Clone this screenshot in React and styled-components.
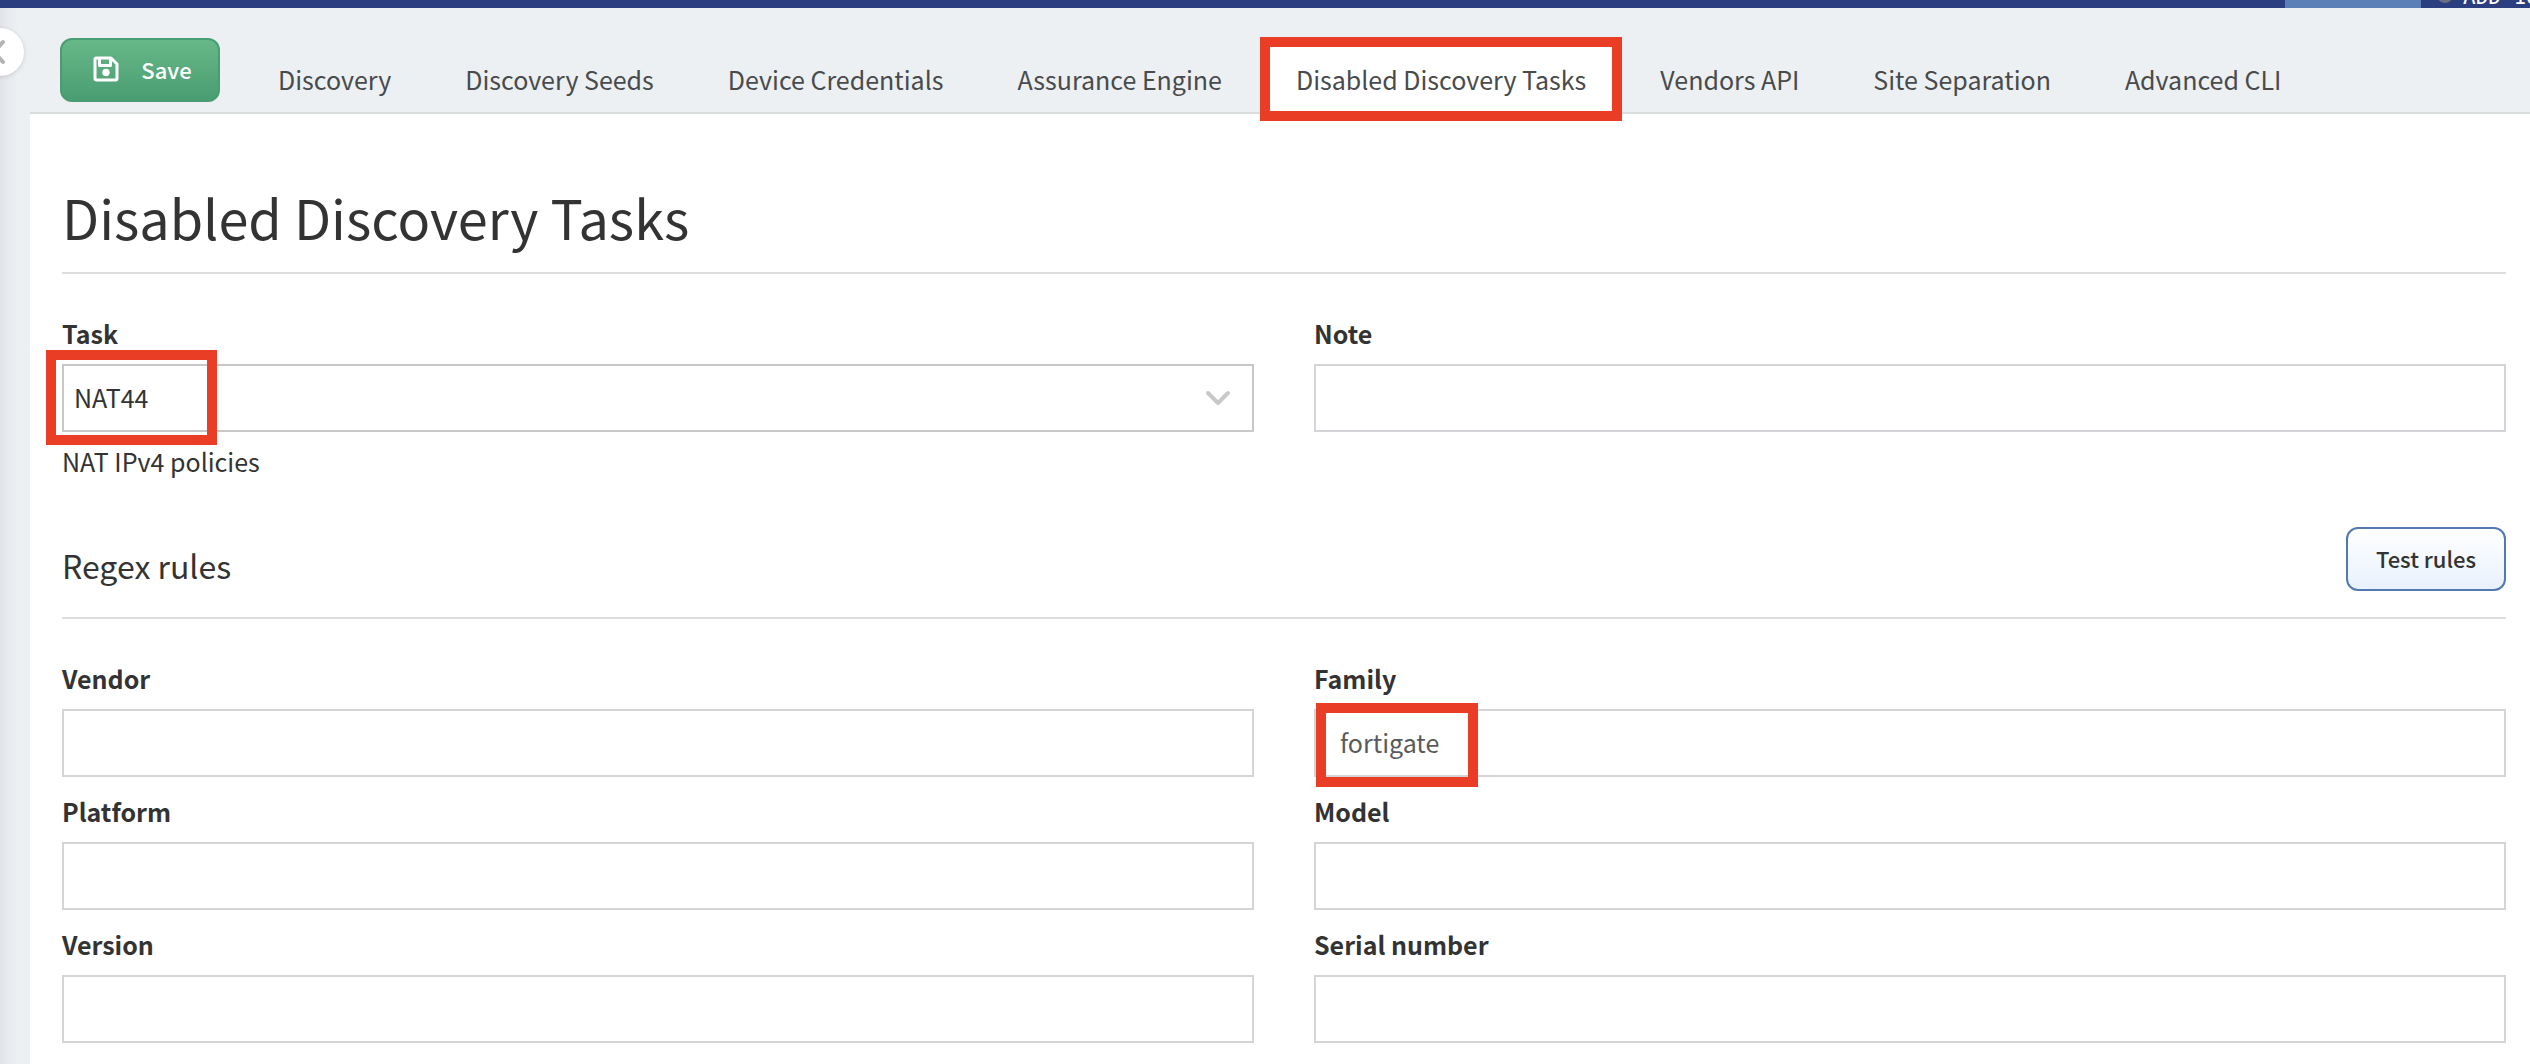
import React from "react";
import styled, { createGlobalStyle } from "styled-components";

const GlobalStyle = createGlobalStyle`
  *, *::before, *::after { box-sizing: border-box; }
  body {
    margin: 0;
    background: #fff;
    color: #333;
    font-family: "Noto Sans CJK SC", "Source Sans Pro", sans-serif;
    font-size: 25px;
    line-height: 38px;
  }
  button, input, select { font: inherit; color: inherit; }
`;

const Page = styled.div`
  display: flex;
  flex-direction: column;
  min-height: 100vh;
  overflow: hidden;
`;

const TopBar = styled.header`
  display: flex;
  justify-content: flex-end;
  height: 8px;
  overflow: hidden;
  background: #2b3f80;
`;

const TopBarActive = styled.div`
  width: 136px;
  background: #5b80b8;
`;

const Snapshot = styled.div`
  display: flex;
  align-items: flex-end;
  gap: 10px;
  width: 109px;
  padding-left: 16px;
  color: #fff;
  font-family: "DejaVu Sans Mono", monospace;
  font-size: 21px;
  line-height: 22px;
  white-space: nowrap;
`;

const Status = styled.span`
  flex: none;
  width: 16px;
  height: 16px;
  margin-bottom: 5px;
  border-radius: 50%;
  background: #6b6f7c;
`;

const Body = styled.div`
  display: flex;
  flex: 1;
`;

const Rail = styled.aside`
  position: relative;
  flex: none;
  width: 30px;
  background: linear-gradient(90deg, #e1e3e7 0, #e7eaee 8px, #ecf0f3 18px);
`;

const Collapse = styled.button`
  position: absolute;
  top: 20px;
  left: -24px;
  display: flex;
  align-items: center;
  justify-content: center;
  width: 48px;
  height: 48px;
  padding: 0;
  border: 0;
  border-radius: 50%;
  background: #fff;
  color: #b4b4b4;
  box-shadow: 0 1px 5px rgba(0, 0, 0, 0.14);
`;

const Main = styled.div`
  flex: 1;
  min-width: 0;
`;

const Toolbar = styled.div`
  display: flex;
  align-items: flex-end;
  gap: 21px;
  height: 106px;
  padding-left: 30px;
  border-bottom: 2px solid #d9dcdd;
  background: #ecf0f3;
`;

const Button = styled.button`
  display: flex;
  align-items: center;
  justify-content: center;
  gap: 22px;
  width: 160px;
  height: 64px;
  padding: ${(p) => (p.$primary ? "0 0 2px 5px" : "0 0 2px")};
  border: 2px solid ${(p) => (p.$primary ? "#4a9d72" : "#5379b1")};
  border-radius: 12px;
  background: ${(p) =>
    p.$primary
      ? "linear-gradient(#67b888, #4a9d72)"
      : "linear-gradient(#fff, #e8f1fc)"};
  color: ${(p) => (p.$primary ? "#fff" : "#333")};
  font-size: 22px;
  font-weight: 500;
  line-height: 32px;
`;

const SaveSlot = styled.div`
  padding-bottom: 10px;
`;

const Tabs = styled.nav`
  display: flex;
`;

const Tab = styled.a`
  position: relative;
  padding: 18px 37px 14px;
  background: ${(p) => (p.$active ? "linear-gradient(#fff, #fff) center / calc(100% - 4px) 100% no-repeat" : "transparent")};
  color: #484a4c;
  text-decoration: none;
  white-space: nowrap;
`;

const Highlight = styled.span`
  position: absolute;
  top: ${(p) => p.$top}px;
  left: ${(p) => p.$left}px;
  width: ${(p) => p.$width};
  height: ${(p) => p.$height}px;
  border: 10px solid #e93e25;
  pointer-events: none;
`;

const Content = styled.main`
  padding: 67px 24px 20px 32px;
`;

const Title = styled.h1`
  margin: 0 0 40px;
  padding-bottom: 19px;
  border-bottom: 2px solid #dcdddd;
  font-size: 54px;
  font-weight: 400;
  line-height: 72px;
`;

const SectionHead = styled.div`
  display: flex;
  align-items: flex-end;
  justify-content: space-between;
  margin: 49px 0 40px;
  padding-bottom: 26px;
  border-bottom: 2px solid #dcdddd;
`;

const Subtitle = styled.h2`
  margin: 0;
  font-size: 32px;
  font-weight: 400;
  line-height: 52px;
`;

const Grid = styled.div`
  display: grid;
  grid-template-columns: 1fr 1fr;
  gap: 15px 60px;
`;

const FieldBox = styled.div`
  display: flex;
  flex-direction: column;
  gap: 12px;
`;

const Label = styled.label`
  font-weight: 700;
`;

const Control = styled.div`
  position: relative;
  display: flex;
  align-items: center;
`;

const Input = styled.input`
  width: 100%;
  height: 68px;
  padding: 0 24px 2px;
  border: 2px solid #d4d5d9;
  border-radius: 0;
  outline: 0;
  background: #fff;
  color: #5a5a5a;
`;

const Select = styled.select`
  width: 100%;
  height: 68px;
  padding: 0 10px 2px;
  border: 2px solid #c8c8c8;
  border-radius: 0;
  appearance: none;
  background: #fff;
`;

const Chevron = styled.svg`
  position: absolute;
  right: 23px;
  pointer-events: none;
`;

const Hint = styled.p`
  margin: 0;
  line-height: 34px;
`;

const tabs = [
  "Discovery",
  "Discovery Seeds",
  "Device Credentials",
  "Assurance Engine",
  "Disabled Discovery Tasks",
  "Vendors API",
  "Site Separation",
  "Advanced CLI",
];

const rules = [
  { id: "vendor", label: "Vendor" },
  { id: "family", label: "Family", value: "fortigate", marked: true },
  { id: "platform", label: "Platform" },
  { id: "model", label: "Model" },
  { id: "version", label: "Version" },
  { id: "serial", label: "Serial number" },
];

function Field({ id, label, value = "", marked }) {
  return (
    <FieldBox>
      <Label htmlFor={id}>{label}</Label>
      <Control>
        <Input id={id} type="text" defaultValue={value} />
        {marked && <Highlight $top={-6} $left={2} $width="162px" $height={84} />}
      </Control>
    </FieldBox>
  );
}

function SaveIcon() {
  return (
    <svg width="26" height="26" viewBox="0 0 26 26" fill="none" stroke="#fff" strokeWidth="3" strokeLinejoin="round" aria-hidden="true">
      <path d="M3.5 2H18L24 8V22.5A1.5 1.5 0 0 1 22.5 24H3.5A1.5 1.5 0 0 1 2 22.5V3.5A1.5 1.5 0 0 1 3.5 2Z" />
      <path d="M6.5 2V9.5H17.5V2" />
      <circle cx="13" cy="16.5" r="3.7" fill="#fff" stroke="none" />
    </svg>
  );
}

export default function App() {
  return (
    <>
      <GlobalStyle />
      <Page>
        <TopBar>
          <TopBarActive />
          <Snapshot>
            <Status />
            ADD-18
          </Snapshot>
        </TopBar>
        <Body>
          <Rail>
            <Collapse type="button" aria-label="Collapse menu">
              <svg width="16" height="26" viewBox="0 0 16 26" fill="none" stroke="currentColor" strokeWidth="4" strokeLinecap="round" aria-hidden="true">
                <path d="M11 3L2 13L11 23" />
              </svg>
            </Collapse>
          </Rail>
          <Main>
            <Toolbar>
              <SaveSlot>
                <Button $primary type="button">
                  <SaveIcon />
                  Save
                </Button>
              </SaveSlot>
              <Tabs>
                {tabs.map((name) => {
                  const active = name === "Disabled Discovery Tasks";
                  return (
                    <Tab key={name} href="#" $active={active}>
                      {name}
                      {active && <Highlight $top={-5} $left={1} $width="calc(100% - 2px)" $height={84} />}
                    </Tab>
                  );
                })}
              </Tabs>
            </Toolbar>
            <Content>
              <Title>Disabled Discovery Tasks</Title>
              <Grid>
                <FieldBox>
                  <Label htmlFor="task">Task</Label>
                  <Control>
                    <Select id="task" defaultValue="NAT44">
                      <option>NAT44</option>
                    </Select>
                    <Chevron width="26" height="18" viewBox="0 0 26 18" fill="none" stroke="#c8c8c8" strokeWidth="4" strokeLinecap="round" strokeLinejoin="round" aria-hidden="true">
                      <path d="M3 4L13 14L23 4" />
                    </Chevron>
                    <Highlight $top={-14} $left={-16} $width="171px" $height={95} />
                  </Control>
                  <Hint>NAT IPv4 policies</Hint>
                </FieldBox>
                <Field id="note" label="Note" />
              </Grid>
              <SectionHead>
                <Subtitle>Regex rules</Subtitle>
                <Button type="button">Test rules</Button>
              </SectionHead>
              <Grid>
                {rules.map((rule) => (
                  <Field key={rule.id} {...rule} />
                ))}
              </Grid>
            </Content>
          </Main>
        </Body>
      </Page>
    </>
  );
}
